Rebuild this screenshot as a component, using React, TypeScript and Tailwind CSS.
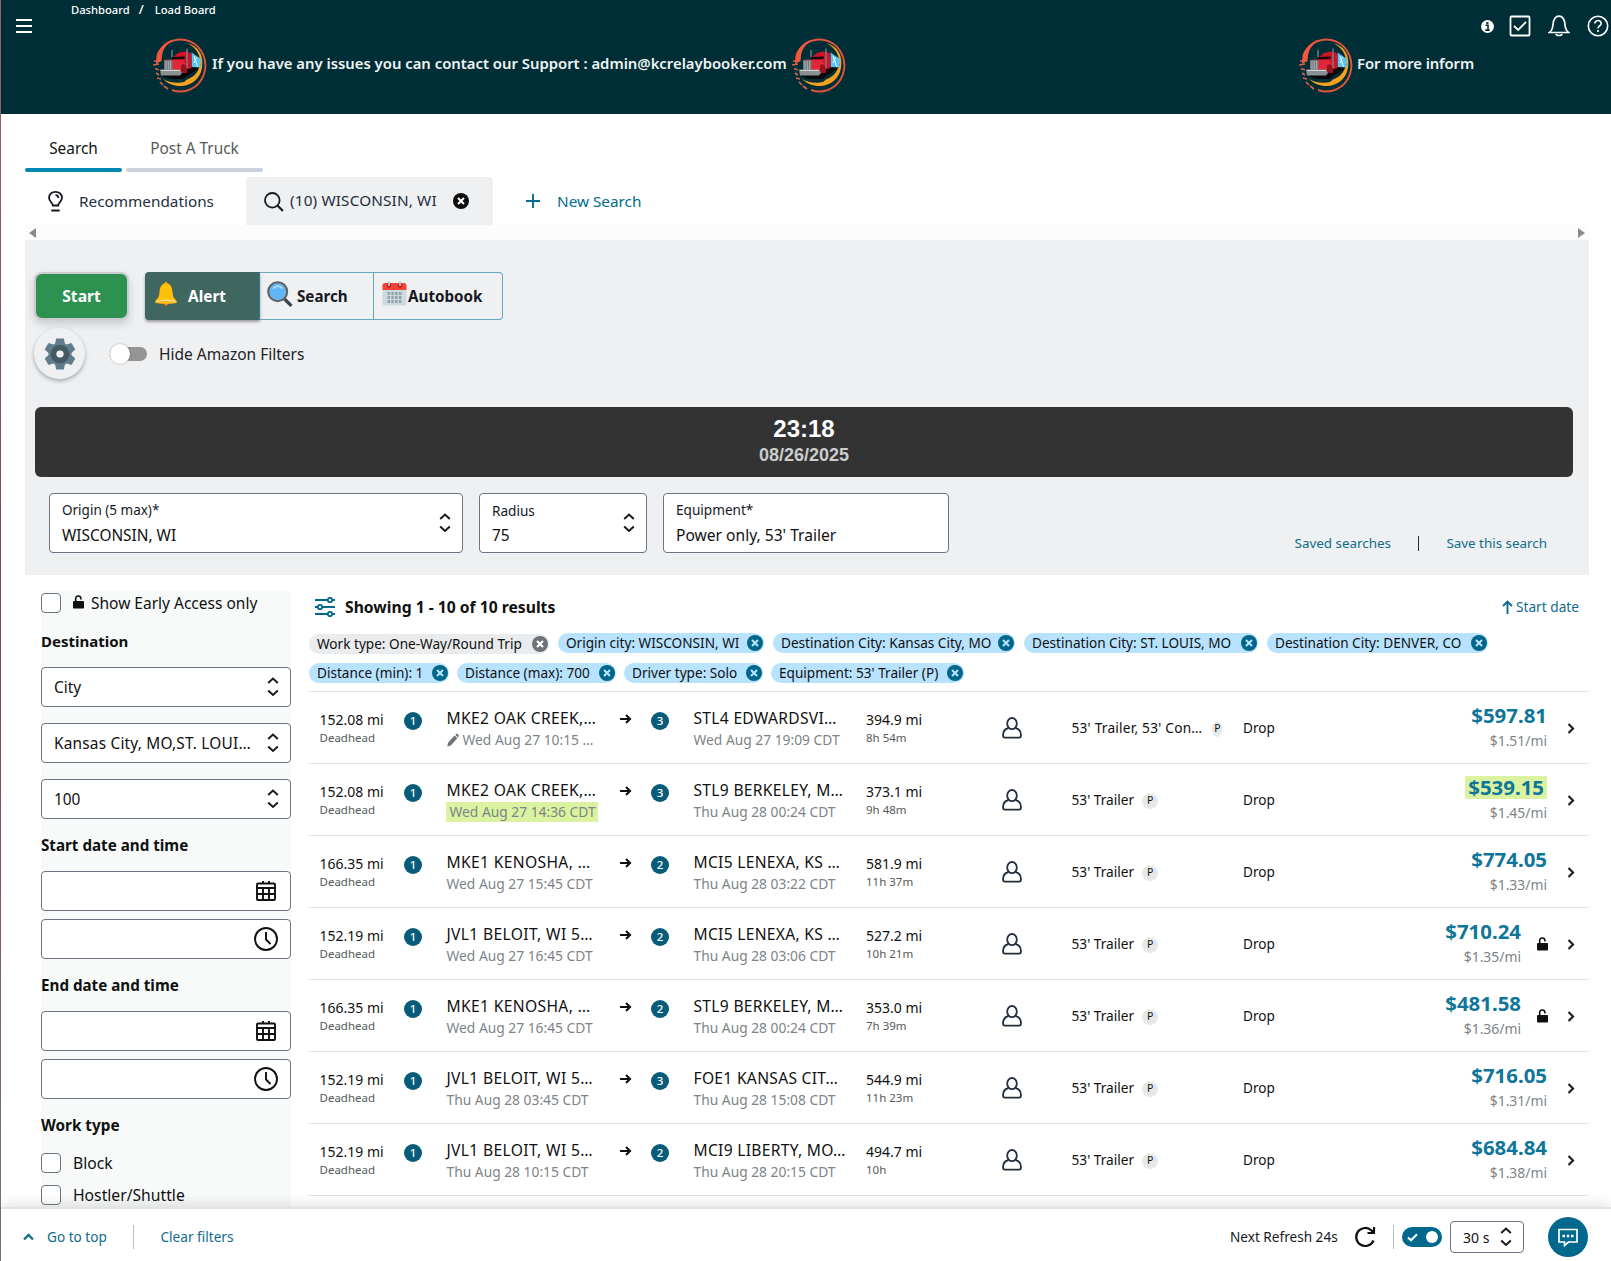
import React from "react";

type Load = {
  dead: string;
  from: string;
  fromTime: string;
  edited?: boolean;
  hot?: boolean;
  stops: number;
  to: string;
  toTime: string;
  miles: string;
  time: string;
  equip?: string;
  price: string;
  rate: string;
  early?: boolean;
};

const loads: Load[] = [
  { dead: "152.08 mi", from: "MKE2 OAK CREEK,…", fromTime: "Wed Aug 27 10:15 …", edited: true, stops: 3, to: "STL4 EDWARDSVI…", toTime: "Wed Aug 27 19:09 CDT", miles: "394.9 mi", time: "8h 54m", equip: "53' Trailer, 53' Con…", price: "$597.81", rate: "$1.51/mi" },
  { dead: "152.08 mi", from: "MKE2 OAK CREEK,…", fromTime: "Wed Aug 27 14:36 CDT", hot: true, stops: 3, to: "STL9 BERKELEY, M…", toTime: "Thu Aug 28 00:24 CDT", miles: "373.1 mi", time: "9h 48m", price: "$539.15", rate: "$1.45/mi" },
  { dead: "166.35 mi", from: "MKE1 KENOSHA, …", fromTime: "Wed Aug 27 15:45 CDT", stops: 2, to: "MCI5 LENEXA, KS …", toTime: "Thu Aug 28 03:22 CDT", miles: "581.9 mi", time: "11h 37m", price: "$774.05", rate: "$1.33/mi" },
  { dead: "152.19 mi", from: "JVL1 BELOIT, WI 5…", fromTime: "Wed Aug 27 16:45 CDT", stops: 2, to: "MCI5 LENEXA, KS …", toTime: "Thu Aug 28 03:06 CDT", miles: "527.2 mi", time: "10h 21m", price: "$710.24", rate: "$1.35/mi", early: true },
  { dead: "166.35 mi", from: "MKE1 KENOSHA, …", fromTime: "Wed Aug 27 16:45 CDT", stops: 2, to: "STL9 BERKELEY, M…", toTime: "Thu Aug 28 00:24 CDT", miles: "353.0 mi", time: "7h 39m", price: "$481.58", rate: "$1.36/mi", early: true },
  { dead: "152.19 mi", from: "JVL1 BELOIT, WI 5…", fromTime: "Thu Aug 28 03:45 CDT", stops: 3, to: "FOE1 KANSAS CIT…", toTime: "Thu Aug 28 15:08 CDT", miles: "544.9 mi", time: "11h 23m", price: "$716.05", rate: "$1.31/mi" },
  { dead: "152.19 mi", from: "JVL1 BELOIT, WI 5…", fromTime: "Thu Aug 28 10:15 CDT", stops: 2, to: "MCI9 LIBERTY, MO…", toTime: "Thu Aug 28 20:15 CDT", miles: "494.7 mi", time: "10h", price: "$684.84", rate: "$1.38/mi" },
];

function TruckLogo() {
  return (
    <svg width="54" height="56" viewBox="0 0 54 56" className="block shrink-0" fill="none">
      <path d="M4.500 18 A25 26 0 1 1 19 53" stroke="#e2543e" strokeWidth="1.900" />
      <path d="M3.500 19 C6 11 12 5 20 2.500 C13 8 9.500 13 9 19 L8.500 24 L3 27 Z" fill="#f4573c" />
      <path d="M1 24 H5 M0 28 L6 27 M2 31.500 L6 33 M3 36 L6 38 M4 41 L8 42 M7 45 L10 48 M11 49 L15 52" stroke="#d9604a" strokeWidth="1.700" />
      <path d="M34 6 C46 9 51 19 49 31 C47 42 39 48 29 49 C22 49.500 15 47 10 42 C17 46 25 46.500 31 45 L34 42.500 C42 40 47 33 47 25 C47 17 43 10.500 34 6 Z" fill="#f5a11f" />
      <path d="M9 39 L18 42 L30 42 L45 32 L48 27 L38 26 L20 33 Z" fill="#070809" />
      <path d="M38.500 15.500 L48 22 L47.500 30.500 L38.500 30 Z" fill="#58c4f4" />
      <path d="M41 19 L44.500 29.500 M43.500 20.500 L41 26" stroke="#fff" strokeWidth=".9" />
      <path d="M20 20 L25 16 L31 14.500 L37 15.500 L38.500 18 L38.500 31 L30 33.500 L20 28 Z" fill="#cf1328" />
      <path d="M19.500 20 L32 19.500 L31.500 22 L19.500 22.500 Z" fill="#16090c" />
      <path d="M13 22.500 L30 23 L33 27 L31 34 L13 33 Z" fill="#e12639" />
      <path d="M28 28 Q32 26 34 30 V36 H28 Z" fill="#9b1020" />
      <path d="M11 23 H19.500 V33.500 H11 Z" fill="#75797c" />
      <path d="M13 24 V33 M15.300 24 V33 M17.600 24 V33" stroke="#b9bcbe" strokeWidth="0.800" />
      <path d="M7 32.500 H27 L29 36 L27 38.500 H8 Z" fill="#8d9092" />
      <path d="M8 33.500 H27" stroke="#d0d2d3" strokeWidth="1" />
      <path d="M19 13 V20 M34 11.500 V31" stroke="#7d868a" strokeWidth="1.300" />
    </svg>
  );
}

function Sort() {
  return (
    <svg width="12" height="20" viewBox="0 0 12 20" fill="none" stroke="#16191f" strokeWidth="2" className="shrink-0">
      <path d="M1.2 6 L6 1.5 L10.8 6 M1.2 13.5 L6 18 L10.8 13.5" />
    </svg>
  );
}

function CloseDot({ size, color, inner }: { size: number; color: string; inner: string }) {
  return (
    <svg width={size} height={size} viewBox="0 0 16 16" className="shrink-0">
      <circle cx="8" cy="8" r="8" fill={color} />
      <path d="M5 5 L11 11 M11 5 L5 11" stroke={inner} strokeWidth="2.1" />
    </svg>
  );
}

function Unlock() {
  return (
    <svg width="11" height="14" viewBox="0 0 11 14" className="shrink-0">
      <path d="M2.7 7 V3.7 A2.6 2.6 0 0 1 7.9 3.4 V4.4" fill="none" stroke="#0f1111" strokeWidth="1.6" />
      <rect x="0" y="6" width="11" height="7.6" rx="0.8" fill="#0f1111" />
    </svg>
  );
}

function CalendarIcon() {
  return (
    <svg width="20" height="20" viewBox="0 0 20 20" fill="none" stroke="#0f1111" strokeWidth="1.9">
      <rect x="1" y="2.5" width="18" height="16.5" rx="1" />
      <path d="M1 7 H19 M1 13 H19 M7 7 V19 M13 7 V19 M7 0 V3 M13 0 V3" />
    </svg>
  );
}

function ClockIcon() {
  return (
    <svg width="24" height="24" viewBox="0 0 24 24" fill="none" stroke="#0f1111" strokeWidth="1.9">
      <circle cx="12" cy="12" r="11" />
      <path d="M12 5 V12.5 L16.5 17" />
    </svg>
  );
}

function Chip({ label, width, gray }: { label: string; width: string; gray?: boolean }) {
  return (
    <div className={`flex h-5 items-center justify-between rounded-full pl-2 pr-[1.5px] text-[13.6px] leading-5 ${gray ? "mt-px bg-[#e9ebed]" : "bg-[#b8e3ff]"} ${width}`}>
      <span className="whitespace-nowrap">{label}</span>
      <CloseDot size={16} color={gray ? "#6f7379" : "#00668a"} inner={gray ? "#fff" : "#b8e3ff"} />
    </div>
  );
}

function Select({ value, tracking = "" }: { value: string; tracking?: string }) {
  return (
    <div className="flex h-10 items-center justify-between rounded-[4px] border border-[#6b7480] bg-white pl-3 pr-[11px]">
      <span className={`whitespace-nowrap pt-0.5 text-[15.4px] ${tracking}`}>{value}</span>
      <Sort />
    </div>
  );
}

function Picker({ children }: { children: React.ReactNode }) {
  return <div className="flex h-10 w-[250px] items-center justify-end rounded-[4px] border border-[#6b7480] bg-white">{children}</div>;
}

function Check() {
  return <span className="block size-5 shrink-0 rounded-[4px] border border-[#6b7480] bg-white" />;
}

function Circle({ n }: { n: number }) {
  return <span className="mt-5 flex size-[18px] shrink-0 items-center justify-center rounded-full bg-[#075c7a] text-[11.5px] font-medium leading-none text-white">{n}</span>;
}

function Row({ load }: { load: Load }) {
  return (
    <div className="flex h-[72px] shrink-0 border-t border-[#e4e4e4]">
      <div className="w-[95px] shrink-0 whitespace-nowrap pl-[10.5px] pt-[18px]">
        <div className="text-[14px] leading-5">{load.dead}</div>
        <div className="text-[11.5px] leading-4 text-[#565959]">Deadhead</div>
      </div>
      <Circle n={1} />
      <div className="w-[173px] shrink-0 whitespace-nowrap pl-[24.5px] pt-4">
        <div className="text-[15.6px] leading-5 tracking-[0.36px]">{load.from}</div>
        <div className="flex pt-0.5 text-[13.8px] leading-5 text-[#7d8487]">
          {load.edited && (
            <svg width="12" height="14" viewBox="0 0 12 14" className="mr-1 mt-[3px]" fill="#6f7373">
              <path d="M0.3 13.5 L1 9.8 L7.6 2.6 L10.3 5.2 L3.8 12.5 Z M8.3 1.8 L9.4 0.8 Q10 .4 10.6 .9 L11.7 2 Q12.1 2.6 11.6 3.2 L10.9 4.4 Z" />
            </svg>
          )}
          {load.hot ? <span className="-ml-px bg-[#dbf3a0] pl-1 pr-0.5">{load.fromTime}</span> : <span>{load.fromTime}</span>}
        </div>
      </div>
      <svg width="12" height="10" viewBox="0 0 12 10" className="ml-[25px] mt-[22px] shrink-0" fill="none" stroke="#0f1111" strokeWidth="2.1">
        <path d="M0 5 H10 M6 1 L10 5 L6 9" />
      </svg>
      <div className="w-[19px] shrink-0" />
      <Circle n={load.stops} />
      <div className="w-[197px] shrink-0 whitespace-nowrap pl-[24.5px] pt-4">
        <div className="text-[15.6px] leading-5 tracking-[0.3px]">{load.to}</div>
        <div className="pt-0.5 text-[13.8px] leading-5 text-[#7d8487]">{load.toTime}</div>
      </div>
      <div className="w-[136px] shrink-0 whitespace-nowrap pt-[18px]">
        <div className="text-[14px] leading-5">{load.miles}</div>
        <div className="text-[11.5px] leading-4 text-[#565959]">{load.time}</div>
      </div>
      <svg width="20" height="22" viewBox="0 0 20 22" className="mt-[25px] shrink-0" fill="none" stroke="#232f3e" strokeWidth="1.8">
        <ellipse cx="10" cy="6.6" rx="4.8" ry="5.6" />
        <path d="M6.600 11 C2.800 11.800 1 14.500 1 18.500 C1 20 1.500 20.600 3 20.600 H17 C18.500 20.600 19 20 19 18.500 C19 14.500 17.200 11.800 13.400 11" />
      </svg>
      <div className="flex w-[221px] shrink-0 items-center pl-[49.5px] pt-0.5 text-[13.700px]">
        <span className={`whitespace-nowrap ${load.equip ? "tracking-[0.22px]" : ""}`}>{load.equip ?? "53' Trailer"}</span>
        {load.equip ? (
          <span className="ml-[10px] flex h-4 w-[10px] items-center justify-center rounded-[50%] bg-[#e7e9e9] text-[10.5px]">P</span>
        ) : (
          <span className="ml-2 flex size-4 items-center justify-center rounded-full bg-[#e7e9e9] text-[10.5px]">P</span>
        )}
      </div>
      <div className="flex w-[100px] shrink-0 items-center pt-0.5 text-[13.600px]">Drop</div>
      <div className="flex flex-1 items-center justify-end">
        <div className="flex flex-col items-end">
          <div className={`text-[20.400px] font-bold leading-[23px] text-[#0f7699] ${load.hot ? "bg-[#dbf3a0] px-[3px]" : ""}`}>{load.price}</div>
          <div className="mt-1 text-[13.900px] leading-5 text-[#7d8487]">{load.rate}</div>
        </div>
        {load.early && (
          <span className="ml-4">
            <Unlock />
          </span>
        )}
        <svg width="8" height="11" viewBox="0 0 8 11" className={`mr-[14px] mt-px shrink-0 ${load.early ? "ml-[19px]" : "ml-5"}`} fill="none" stroke="#222" strokeWidth="2.2">
          <path d="M1.500 1 L6 5.500 L1.500 10" />
        </svg>
      </div>
    </div>
  );
}

function Header() {
  return (
    <header className="flex h-[114px] shrink-0 bg-[#002e36] text-white">
      <div className="flex w-[70px] shrink-0 flex-col gap-1 pl-[15px] pt-[19px]">
        <span className="h-0.5 w-4 bg-white" />
        <span className="h-0.5 w-4 bg-white" />
        <span className="h-0.5 w-4 bg-white" />
      </div>
      <div className="flex flex-1 flex-col">
        <div className="flex h-5 items-center text-[11.200px] font-medium">
          <span>Dashboard</span>
          <span className="ml-[9px] text-[13px]">/</span>
          <span className="ml-[11px]">Load Board</span>
        </div>
        <div className="ml-[82px] mt-[17px] flex items-center whitespace-nowrap text-[14.850px] font-semibold text-[#f0f3f3]">
          <TruckLogo />
          <span className="ml-[5px] w-[575px] shrink-0 pb-[3px]">If you have any issues you can contact our Support : admin@kcrelaybooker.com</span>
          <span className="ml-[5px] shrink-0">
            <TruckLogo />
          </span>
          <span className="ml-[453px] shrink-0">
            <TruckLogo />
          </span>
          <span className="ml-1 shrink-0 pb-[3px] tracking-[-0.1px]">For more inform</span>
        </div>
      </div>
      <div className="flex w-[130px] shrink-0 pt-[15px]">
        <svg width="13" height="13" viewBox="0 0 13 13" className="mt-[5px]">
          <circle cx="6.500" cy="6.500" r="6.500" fill="#fff" />
          <path d="M4.500 5.300 H7 V9.800 M4.300 10.100 H8.700" stroke="#002e36" strokeWidth="1.600" fill="none" />
          <circle cx="6.400" cy="3.100" r="1.200" fill="#002e36" />
        </svg>
        <svg width="22" height="22" viewBox="0 0 22 22" className="ml-[15px]" fill="none" stroke="#fff" strokeWidth="1.800">
          <rect x="1.500" y="1.500" width="19" height="19" rx="1" />
          <path d="M5 11 L9.200 15 L17 7" />
        </svg>
        <svg width="22" height="22" viewBox="0 0 22 22" className="ml-[17px]" fill="none" stroke="#fff" strokeWidth="1.700">
          <path d="M1.500 17.500 C4 15.500 4.500 14 5 10 C5.400 4.500 7 1.200 11 1.200 C15 1.200 16.600 4.500 17 10 C17.500 14 18 15.500 20.500 17.500 Z" />
          <path d="M8 19 C8.500 21 13.500 21 14 19" />
        </svg>
        <svg width="22" height="22" viewBox="0 0 22 22" className="ml-[17px]" fill="none" stroke="#fff" strokeWidth="1.600">
          <circle cx="11" cy="11" r="9.700" />
          <path d="M7.800 8.600 C7.800 4.400 14.300 4.600 14.200 8.500 C14.100 11 11 10.800 11 13.600 M11 15 V17" />
        </svg>
      </div>
    </header>
  );
}

function Toolbar() {
  return (
    <>
      <div className="flex pl-[9px] pt-[32px]">
        <button className="flex h-[48px] w-[95px] items-center justify-center rounded-[8px] border-2 border-[#c9cbcd] bg-[#2d9150] pt-0.5 text-[15.600px] font-bold text-white shadow-[0_4px_8px_rgba(0,0,0,0.16)]">Start</button>
        <div className="ml-4 flex h-12 text-[15.200px] font-bold text-[#16191f]">
          <div className="flex w-[115px] items-center rounded-l-[4px] border-r border-[#2f7e99] bg-[#3f665f] pl-[9px] text-white shadow-[0_2px_3px_rgba(0,0,0,0.35)]">
            <svg width="24" height="26" viewBox="0 0 24 26" className="-mt-1">
              <path d="M10.500 2 Q12 -.500 13.500 2 V4 H10.500 Z" fill="#ffa000" />
              <path d="M9.500 22 Q12 28 14.500 22 Z" fill="#f57f17" />
              <path d="M12 2.300 C7.500 2.300 6 6 5.500 11 C5 15.500 4.500 17 1.500 19.500 L1.500 22 H22.500 V19.500 C19.500 17 19 15.500 18.500 11 C18 6 16.500 2.300 12 2.300 Z" fill="#ffc107" />
              <path d="M1.500 20.500 Q12 17.500 22.500 20.500 V22 Q12 24 1.500 22 Z" fill="#fdb813" />
              <path d="M3 20.300 Q12 17.800 21 20.300" stroke="#fff" strokeWidth="1" fill="none" opacity=".8" />
            </svg>
            <span className="ml-[10px] pt-0.5 text-[15.400px]">Alert</span>
          </div>
          <div className="flex w-[114px] items-center border-y border-r border-[#6aa9bd] pl-[7px]">
            <svg width="26" height="26" viewBox="0 0 26 26" fill="none" className="-mt-1">
              <path d="M17.500 18 L24.500 25" stroke="#37474f" strokeWidth="3.200" />
              <circle cx="10.700" cy="10.700" r="9.500" fill="#64b5f6" stroke="#616161" strokeWidth="2" />
              <path d="M6 7.500 Q10.700 2.800 15.500 7.500" stroke="#bbdefb" strokeWidth="1.500" />
            </svg>
            <span className="ml-[4px] pt-px">Search</span>
          </div>
          <div className="flex w-[129px] items-center rounded-r-[4px] border-y border-r border-[#6aa9bd] pl-2">
            <svg width="25" height="26" viewBox="0 0 25 26" className="-mt-1">
              <path d="M0.500 8 H24.500 V22.500 Q24.500 24.500 22.500 24.500 H2.500 Q.500 24.500 .500 22.500 Z" fill="#cfd8dc" />
              <path d="M.500 9 V4.500 Q.500 2 3 2 H22 Q24.500 2 24.500 4.500 V9 Z" fill="#f44336" />
              <circle cx="7" cy="4.500" r="2.200" fill="#b71c1c" />
              <circle cx="18" cy="4.500" r="2.200" fill="#b71c1c" />
              <path d="M7 0.500 V5 M18 .500 V5" stroke="#b0bec5" strokeWidth="2" />
              <path d="M5.500 12.500 H19.500 M5.500 16.500 H19.500 M5.500 20.500 H19.500" stroke="#90a4ae" strokeWidth="2.800" strokeDasharray="2.500 1.300" />
            </svg>
            <span className="ml-px pt-px">Autobook</span>
          </div>
        </div>
      </div>
      <div className="flex items-center pl-[9px] pt-2">
        <div className="flex size-[51px] items-center justify-center rounded-full bg-[#eff0f2] shadow-[0_2px_4px_rgba(0,0,0,0.3)]">
          <svg width="32" height="32" viewBox="-16 -16 32 32">
            <g fill="#607d8b">
              <circle r="11.500" />
              {[0, 60, 120, 180, 240, 300].map((a) => (
                <path key={a} d="M-5 -10 L-3.800 -15.500 H3.800 L5 -10 Z" transform={`rotate(${a})`} />
              ))}
            </g>
            <circle r="6.300" fill="#eff0f2" stroke="#455a64" strokeWidth="6" />
            <circle r="3.600" fill="#eff0f2" />
          </svg>
        </div>
        <div className="ml-[25px] flex h-[14px] w-[37px] items-center rounded-full bg-[#949494]">
          <span className="size-5 shrink-0 rounded-full bg-white shadow-[0_0_2px_rgba(0,0,0,0.35)]" />
        </div>
        <span className="ml-3 pt-0.5 text-[15.500px] text-[#222]">Hide Amazon Filters</span>
      </div>
    </>
  );
}

function Sidebar() {
  return (
    <aside className="ml-4 mt-4 flex w-[250px] shrink-0 flex-col bg-[#f8fafa]">
      <div className="mt-0.5 flex h-5 items-center">
        <Check />
        <span className="ml-3 mt-[-2px]">
          <Unlock />
        </span>
        <span className="ml-[7px] whitespace-nowrap pt-0.5 text-[15.500px]">Show Early Access only</span>
      </div>
      <h3 className="mt-[18px] text-[15px] font-bold leading-5">Destination</h3>
      <div className="mt-4 flex flex-col gap-4">
        <Select value="City" />
        <Select value="Kansas City, MO,ST. LOUI…" tracking="tracking-[0.2px]" />
        <Select value="100" />
      </div>
      <h3 className="mt-4 text-[15.200px] font-bold leading-5">Start date and time</h3>
      <div className="mt-4 flex flex-col gap-2">
        <Picker><span className="mr-[14px]"><CalendarIcon /></span></Picker>
        <Picker><span className="mr-[12px]"><ClockIcon /></span></Picker>
      </div>
      <h3 className="mt-4 text-[15.200px] font-bold leading-5">End date and time</h3>
      <div className="mt-4 flex flex-col gap-2">
        <Picker><span className="mr-[14px]"><CalendarIcon /></span></Picker>
        <Picker><span className="mr-[12px]"><ClockIcon /></span></Picker>
      </div>
      <h3 className="mt-4 text-[15.300px] font-bold leading-5">Work type</h3>
      <div className="mt-[18px] flex flex-col gap-3 text-[15.700px]">
        <div className="flex h-5 items-center gap-3"><Check /><span className="pt-0.5">Block</span></div>
        <div className="flex h-5 items-center gap-3"><Check /><span className="pt-0.5">Hostler/Shuttle</span></div>
      </div>
    </aside>
  );
}

function Results() {
  return (
    <section className="ml-[18px] flex flex-1 flex-col pt-[21px]">
      <div className="flex h-[22px] items-center">
        <svg width="21" height="20" viewBox="0 0 21 20" className="ml-[6px]" fill="none" stroke="#00688d" strokeWidth="1.800">
          <path d="M0 3 H12.500 M17.500 3 H20 M0 10 H2.500 M7.500 10 H20 M0 17 H12.500 M17.500 17 H20" />
          <circle cx="15" cy="3" r="2.200" />
          <circle cx="5" cy="10" r="2.200" />
          <circle cx="15" cy="17" r="2.200" />
        </svg>
        <span className="ml-[9px] pt-0.5 text-[15.700px] font-bold">Showing 1 - 10 of 10 results</span>
        <span className="ml-auto mr-[10px] flex items-center text-[13.700px] text-[#0f6c8c]">
          <svg width="11" height="14" viewBox="0 0 11 14" className="mr-[3px] mt-px" fill="none" stroke="#0f6c8c" strokeWidth="1.900">
            <path d="M5.500 14 V1.500 M1 6 L5.500 1.500 L10 6" />
          </svg>
          Start date
        </span>
      </div>
      <div className="mt-[15px] flex h-[30px] items-start">
        <div className="flex gap-[9px]">
          <Chip label="Work type: One-Way/Round Trip" width="w-[240px]" gray />
          <Chip label="Origin city: WISCONSIN, WI" width="w-[206px]" />
          <Chip label="Destination City: Kansas City, MO" width="w-[242px]" />
          <Chip label="Destination City: ST. LOUIS, MO" width="w-[234px]" />
          <Chip label="Destination City: DENVER, CO" width="w-[221px]" />
        </div>
      </div>
      <div className="flex h-[28px] items-start gap-2">
        <Chip label="Distance (min): 1" width="w-[140px]" />
        <Chip label="Distance (max): 700" width="w-[159px]" />
        <Chip label="Driver type: Solo" width="w-[139px]" />
        <Chip label="Equipment: 53' Trailer (P)" width="w-[193px]" />
      </div>
      <div className="flex flex-col">
        {loads.map((l, i) => (
          <Row key={i} load={l} />
        ))}
        <div className="border-t border-[#e4e4e4]" />
      </div>
    </section>
  );
}

function Footer() {
  return (
    <footer className="z-10 flex h-[54px] shrink-0 items-center border-t-2 border-[#e3e3e3] bg-white pt-1 text-[13.600px] shadow-[0_-4px_10px_rgba(0,0,0,0.1)]">
      <svg width="11" height="8" viewBox="0 0 11 8" className="ml-[22px]" fill="none" stroke="#0f6c8c" strokeWidth="2.300">
        <path d="M1 6.500 L5.500 2 L10 6.500" />
      </svg>
      <span className="ml-[13px] w-[60px] whitespace-nowrap text-[#0f6c8c]">Go to top</span>
      <span className="ml-[26px] h-6 w-px bg-[#bbbfbf]" />
      <span className="ml-[26.500px] text-[#0f6c8c]">Clear filters</span>
      <div className="ml-auto mr-[23px] flex items-center">
        <span className="w-[108px] whitespace-nowrap text-[#16191f]">Next Refresh 24s</span>
        <svg width="22" height="22" viewBox="0 0 22 22" className="ml-[16px] mr-px" fill="none" stroke="#0f1111" strokeWidth="2.200">
          <path d="M19.500 14.500 A9 9 0 1 1 17.500 4.500 L19.500 6.500 M20 1 V7 H13.500" />
        </svg>
        <span className="ml-[16px] h-6 w-px bg-[#bbbfbf]" />
        <span className="ml-2 flex h-5 w-10 items-center justify-between rounded-full bg-[#00688d] pl-[5px] pr-1">
          <svg width="11" height="9" viewBox="0 0 11 9" fill="none" stroke="#fff" strokeWidth="2">
            <path d="M1 4.500 L4 7.300 L10 1.200" />
          </svg>
          <span className="size-3 rounded-full bg-white" />
        </span>
        <span className="ml-2 flex h-8 w-[74px] items-center justify-between rounded-[4px] border border-[#6b7480] pl-3 pr-[11px]">
          <span className="text-[14px]">30 s</span>
          <Sort />
        </span>
        <span className="ml-6 flex size-10 items-center justify-center rounded-full bg-[#00688d]">
          <svg width="20" height="19" viewBox="0 0 20 19" fill="none" stroke="#fff" strokeWidth="1.700">
            <path d="M1 1.500 H19 V14 H10.500 L6.500 17.500 V14 H1 Z" />
            <path d="M4.500 8 H7 M8.800 8 H11.200 M13 8 H15.500" strokeWidth="2.400" />
          </svg>
        </span>
      </div>
    </footer>
  );
}

export default function App() {
  return (
    <div className="flex h-[1261px] w-[1611px] overflow-hidden bg-white font-['Noto_Sans',sans-serif] text-[#0f1111]">
      <div className="w-px shrink-0 bg-linear-to-b from-[#9a6266] via-[#7d4a52] to-[#81708a]" />
      <div className="flex min-w-0 flex-1 flex-col">
        <Header />
        <main className="flex min-h-0 flex-1 flex-col overflow-hidden pl-6 pr-[22px]">
          <div className="mt-[19px] flex h-[39px] shrink-0 gap-1 text-[15.400px]">
            <div className="flex w-[97px] flex-col justify-between text-center">
              <span className="leading-8">Search</span>
              <span className="h-1 rounded-full bg-[#0087b3]" />
            </div>
            <div className="flex w-[137px] flex-col justify-between text-center text-[#565959]">
              <span className="leading-8">Post A Truck</span>
              <span className="h-1 rounded-full bg-[#cad3dc]" />
            </div>
          </div>
          <div className="mt-[5px] flex h-12 shrink-0 items-center text-[15.300px] text-[#232f3e]">
            <svg width="15" height="21" viewBox="0 0 15 21" className="ml-[23px] mr-px" fill="none" stroke="#16191f" strokeWidth="1.800">
              <path d="M4.800 14.500 C4.800 11.500 1 10.500 1 6.800 C1 3.200 4 .900 7.500 .900 C11 .900 14 3.200 14 6.800 C14 10.500 10.200 11.500 10.200 14.500 Z" />
              <path d="M7.500 4.200 Q10.300 4.300 10.300 7 M3.300 19.500 H11.700" />
            </svg>
            <span className="ml-[15px] w-[134px] whitespace-nowrap">Recommendations</span>
            <div className="ml-[33px] flex h-full w-[247px] items-center rounded-t-[4px] bg-[#eff0f2]">
              <svg width="20" height="20" viewBox="0 0 20 20" className="ml-[18px] mt-px" fill="none" stroke="#16191f" strokeWidth="1.800">
                <circle cx="8.300" cy="8.300" r="7.300" />
                <path d="M13.500 13.500 L19 19" strokeWidth="2.200" />
              </svg>
              <span className="ml-[6px] w-[147px] whitespace-nowrap pb-0.5 tracking-[0.15px]">(10) WISCONSIN, WI</span>
              <span className="ml-4"><CloseDot size={16} color="#0b0c0e" inner="#fff" /></span>
            </div>
            <svg width="14" height="14" viewBox="0 0 14 14" className="ml-[33px]" stroke="#006c8f" strokeWidth="1.900">
              <path d="M7 0 V14 M0 7 H14" />
            </svg>
            <span className="ml-[17px] text-[#006c8f]">New Search</span>
          </div>
          <div className="flex h-[15px] shrink-0 items-center justify-between bg-[#fcfcfc] px-1">
            <svg width="8" height="10" viewBox="0 0 8 10" fill="#8b8b8b"><path d="M0 5 L7 0 V10 Z" /></svg>
            <svg width="8" height="10" viewBox="0 0 8 10" fill="#8b8b8b"><path d="M8 5 L1 0 V10 Z" /></svg>
          </div>
          <div className="flex h-[335px] shrink-0 flex-col bg-[#eff0f2]">
            <Toolbar />
            <div className="ml-[10px] mr-4 mt-[28px] flex h-[70px] shrink-0 flex-col items-center rounded-[6px] bg-[#333] pt-2 font-['Liberation_Sans',sans-serif] font-bold">
              <span className="text-[24px] leading-[27px] text-white">23:18</span>
              <span className="mt-[3px] text-[18px] leading-[20px] text-[#ccc]">08/26/2025</span>
            </div>
            <div className="ml-6 mt-4 flex gap-4">
              <div className="flex h-[60px] w-[414px] items-center justify-between rounded-[4px] border border-[#6b7480] bg-white pl-3 pr-[11px]">
                <div>
                  <div className="pt-0.5 text-[13.500px] leading-5 text-[#16191f]">Origin (5 max)*</div>
                  <div className="mt-1 text-[15.400px] leading-6">WISCONSIN, WI</div>
                </div>
                <Sort />
              </div>
              <div className="flex h-[60px] w-[168px] items-center justify-between rounded-[4px] border border-[#6b7480] bg-white pl-3 pr-[11px]">
                <div>
                  <div className="pt-0.5 text-[13.600px] leading-5 text-[#16191f]">Radius</div>
                  <div className="mt-[3px] text-[15.400px] leading-6">75</div>
                </div>
                <Sort />
              </div>
              <div className="flex h-[60px] w-[286px] items-center rounded-[4px] border border-[#6b7480] bg-white pl-3">
                <div>
                  <div className="pt-px text-[13.600px] leading-5 text-[#16191f]">Equipment*</div>
                  <div className="mt-[3px] text-[15.600px] leading-6">Power only, 53' Trailer</div>
                </div>
              </div>
              <div className="ml-auto mr-[42px] mt-[38px] flex items-center self-start text-[13.400px] leading-6 text-[#0f6c8c]">
                <span>Saved searches</span>
                <span className="ml-[27px] h-[15px] w-[1.500px] bg-[#232f3e]" />
                <span className="ml-[27px]">Save this search</span>
              </div>
            </div>
          </div>
          <div className="flex min-h-0 flex-1 shrink-0">
            <Sidebar />
            <Results />
          </div>
        </main>
        <Footer />
      </div>
    </div>
  );
}
